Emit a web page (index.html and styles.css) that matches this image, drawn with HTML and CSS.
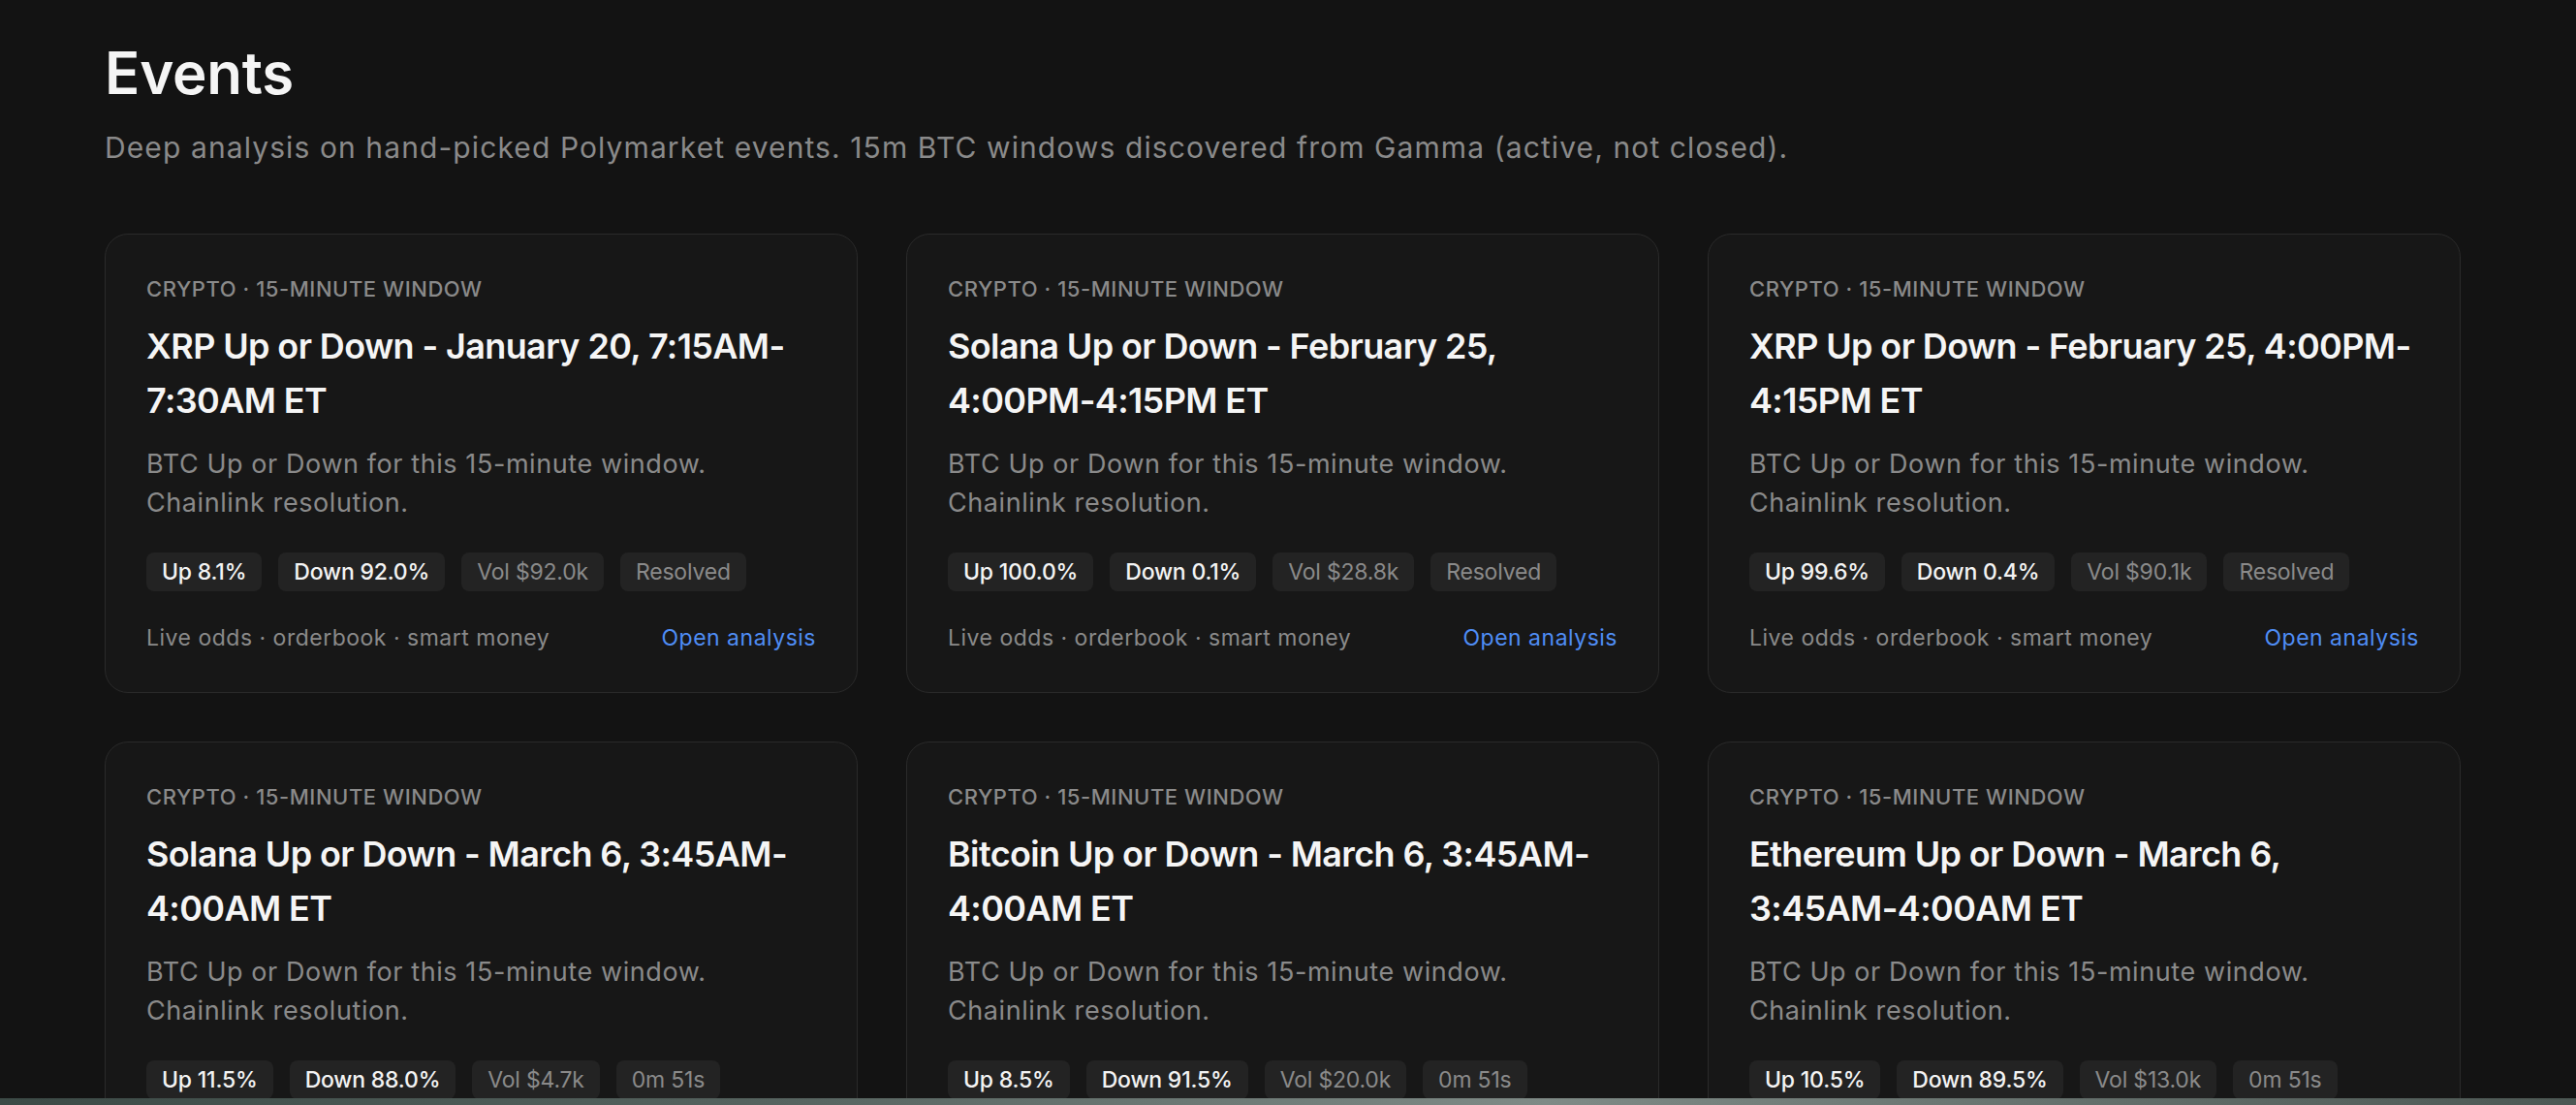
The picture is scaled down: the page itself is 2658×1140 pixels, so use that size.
FILE: index.html
```html
<!DOCTYPE html>
<html lang="en">
<head>
<meta charset="utf-8">
<title>Events</title>
<link rel="stylesheet" href="styles.css">
</head>
<body>
<div class="viewport">
  <main class="page">
    <h1 class="title">Events</h1>
    <p class="subtitle">Deep analysis on hand-picked Polymarket events. 15m BTC windows discovered from Gamma (active, not closed).</p>
    <section class="grid">
      <article class="card">
        <div class="cat">Crypto · 15-minute window</div>
        <h2 class="name">XRP Up or Down - January 20, 7:15AM-7:30AM ET</h2>
        <p class="desc">BTC Up or Down for this 15-minute window. Chainlink resolution.</p>
        <div class="pills"><span class="pill">Up 8.1%</span><span class="pill">Down 92.0%</span><span class="pill muted">Vol $92.0k</span><span class="pill muted">Resolved</span></div>
        <div class="foot"><span>Live odds · orderbook · smart money</span><a class="link" href="#">Open analysis</a></div>
      </article>
      <article class="card">
        <div class="cat">Crypto · 15-minute window</div>
        <h2 class="name">Solana Up or Down - February 25, 4:00PM-4:15PM ET</h2>
        <p class="desc">BTC Up or Down for this 15-minute window. Chainlink resolution.</p>
        <div class="pills"><span class="pill">Up 100.0%</span><span class="pill">Down 0.1%</span><span class="pill muted">Vol $28.8k</span><span class="pill muted">Resolved</span></div>
        <div class="foot"><span>Live odds · orderbook · smart money</span><a class="link" href="#">Open analysis</a></div>
      </article>
      <article class="card">
        <div class="cat">Crypto · 15-minute window</div>
        <h2 class="name">XRP Up or Down - February 25, 4:00PM-4:15PM ET</h2>
        <p class="desc">BTC Up or Down for this 15-minute window. Chainlink resolution.</p>
        <div class="pills"><span class="pill">Up 99.6%</span><span class="pill">Down 0.4%</span><span class="pill muted">Vol $90.1k</span><span class="pill muted">Resolved</span></div>
        <div class="foot"><span>Live odds · orderbook · smart money</span><a class="link" href="#">Open analysis</a></div>
      </article>
      <article class="card">
        <div class="cat">Crypto · 15-minute window</div>
        <h2 class="name">Solana Up or Down - March 6, 3:45AM-4:00AM ET</h2>
        <p class="desc">BTC Up or Down for this 15-minute window. Chainlink resolution.</p>
        <div class="pills"><span class="pill">Up 11.5%</span><span class="pill">Down 88.0%</span><span class="pill muted">Vol $4.7k</span><span class="pill muted">0m 51s</span></div>
        <div class="foot"><span>Live odds · orderbook · smart money</span><a class="link" href="#">Open analysis</a></div>
      </article>
      <article class="card">
        <div class="cat">Crypto · 15-minute window</div>
        <h2 class="name">Bitcoin Up or Down - March 6, 3:45AM-4:00AM ET</h2>
        <p class="desc">BTC Up or Down for this 15-minute window. Chainlink resolution.</p>
        <div class="pills"><span class="pill">Up 8.5%</span><span class="pill">Down 91.5%</span><span class="pill muted">Vol $20.0k</span><span class="pill muted">0m 51s</span></div>
        <div class="foot"><span>Live odds · orderbook · smart money</span><a class="link" href="#">Open analysis</a></div>
      </article>
      <article class="card">
        <div class="cat">Crypto · 15-minute window</div>
        <h2 class="name">Ethereum Up or Down - March 6, 3:45AM-4:00AM ET</h2>
        <p class="desc">BTC Up or Down for this 15-minute window. Chainlink resolution.</p>
        <div class="pills"><span class="pill">Up 10.5%</span><span class="pill">Down 89.5%</span><span class="pill muted">Vol $13.0k</span><span class="pill muted">0m 51s</span></div>
        <div class="foot"><span>Live odds · orderbook · smart money</span><a class="link" href="#">Open analysis</a></div>
      </article>
    </section>
  </main>
</div>
<div class="desktop-strip"></div>
</body>
</html>
```
FILE: styles.css
```css
html, body {
  margin: 0;
  padding: 0;
  background: #131313;
}
body {
  font-family: Inter, "Liberation Sans", sans-serif;
  color: #f3f3f3;
  width: 2658px;
  height: 1140px;
  overflow: hidden;
}
.viewport {
  height: 1133px;
  overflow: hidden;
}
.page {
  padding: 39px 119px 0 108px;
}
.title {
  margin: 0;
  font-size: 60px;
  line-height: 72px;
  font-weight: 600;
  letter-spacing: -0.2px;
  color: #f5f5f5;
}
.subtitle {
  margin: 19px 0 0;
  font-size: 30px;
  line-height: 45px;
  color: #8a8a8a;
  font-weight: 400;
  letter-spacing: 1.1px;
}
.grid {
  margin-top: 66px;
  display: grid;
  grid-template-columns: repeat(3, 1fr);
  gap: 50px;
}
.card {
  background: #171717;
  border: 1px solid #2a2a2a;
  border-radius: 24px;
  padding: 40px 42px 38px;
  height: 474px;
  box-sizing: border-box;
}
.cat {
  font-size: 22px;
  line-height: 32px;
  text-transform: uppercase;
  color: #8a8a8a;
  font-weight: 500;
  letter-spacing: 0.55px;
}
.name {
  margin: 15px 0 0;
  font-size: 36px;
  line-height: 56px;
  font-weight: 600;
  letter-spacing: -0.62px;
  color: #f5f5f5;
}
.desc {
  margin: 18px 0 0;
  font-size: 27px;
  line-height: 40px;
  color: #8a8a8a;
  letter-spacing: 0.58px;
}
.pills {
  margin-top: 31px;
  display: flex;
  gap: 17px;
}
.pill {
  display: flex;
  align-items: center;
  height: 40px;
  padding: 0 16px;
  border-radius: 8px;
  background: #232323;
  font-size: 23px;
  letter-spacing: -0.2px;
  color: #f3f3f3;
  font-weight: 500;
}
.pill.muted {
  color: #8a8a8a;
  font-weight: 400;
}
.foot {
  margin-top: 30px;
  display: flex;
  justify-content: space-between;
  align-items: center;
  font-size: 23px;
  line-height: 36px;
  color: #8a8a8a;
  letter-spacing: 0.5px;
}
.link {
  color: #4f8df5;
  text-decoration: none;
}
.desktop-strip {
  height: 7px;
  background: linear-gradient(90deg, #3c4a46 0%, #56635f 30%, #7f8a86 60%, #4c5753 100%);
}
```
